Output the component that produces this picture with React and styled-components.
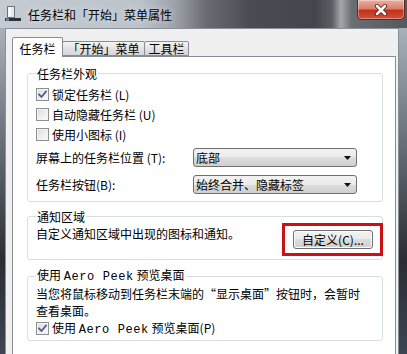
import React from 'react';
import styled, {createGlobalStyle} from 'styled-components';

const GlobalStyle = createGlobalStyle`
  html, body {
    margin: 0;
    padding: 0;
    overflow: hidden;
  }
  body {
    font-family: "Noto Sans CJK SC", "Noto Sans", sans-serif;
    font-size: 12px;
    color: #000;
  }
`;

const Window = styled.div`
  width: 407px;
  height: 354px;
  display: flex;
  flex-direction: column;
  overflow: hidden;
  background: linear-gradient(
    180deg,
    #b9c1c9 0,
    #737b84 120px,
    #2a2d33 260px,
    #3d4552 354px
  );
`;

const TitleBar = styled.div`
  height: 28px;
  flex: none;
  display: flex;
  align-items: flex-start;
  background: linear-gradient(
    90deg,
    #c4cbd3 0,
    #bcc3cb 140px,
    #9da2a9 175px,
    #6b6d74 205px,
    #4b4b53 250px,
    #45454d 315px,
    #5c5e64 332px,
    #a4a8ac 341px,
    #6a6d72 352px,
    #55585e 407px
  );
`;

const AppIcon = styled.svg`
  width: 16px;
  height: 16px;
  margin: 6px 0 0 5px;
  flex: none;
`;

const Title = styled.div`
  margin: 7px 0 0 7px;
  line-height: 16px;
  text-shadow: 0 0 6px rgba(255, 255, 255, 0.7);
`;

const CloseButton = styled.div`
  margin-left: auto;
  margin-right: 2px;
  width: 48px;
  height: 20px;
  box-sizing: border-box;
  border: 1px solid #5a2a24;
  border-top: none;
  border-radius: 0 0 5px 5px;
  background: linear-gradient(
    180deg,
    #e9b0a4 0,
    #d9806c 45%,
    #c2301a 55%,
    #d2523a 100%
  );
  box-shadow: inset 0 0 0 1px rgba(255, 255, 255, 0.35);
  display: flex;
  align-items: center;
  justify-content: center;
`;

const Body = styled.div`
  flex: 1;
  margin: 0 8px 0 5px;
  background: #f0f0f0;
  border: 1px solid #8a9097;
  border-bottom: none;
  padding: 8px 2px 0 6px;
  display: flex;
  flex-direction: column;
  min-height: 0;
`;

const TabStrip = styled.div`
  display: flex;
  align-items: flex-end;
  height: 20px;
  margin-bottom: -1px;
  position: relative;
  z-index: 1;
`;

const Tab = styled.div`
  box-sizing: border-box;
  width: ${p => p.$w}px;
  height: ${p => (p.$active ? 20 : 15)}px;
  margin-bottom: ${p => (p.$active ? 0 : 1)}px;
  margin-left: ${p => (p.$first ? 0 : -1)}px;
  border: 1px solid #898c95;
  border-bottom: ${p => (p.$active ? 'none' : '1px solid #898c95')};
  border-radius: 2px 2px 0 0;
  background: ${p =>
    p.$active ? '#fff' : 'linear-gradient(180deg, #f4f4f4 0, #e4e4e4 50%, #d6d6d6 100%)'};
  display: flex;
  align-items: center;
  justify-content: center;
  line-height: 14px;
  padding-top: ${p => (p.$active ? 2 : 0)}px;
`;

const Panel = styled.div`
  flex: 1;
  background: #fff;
  border: 1px solid #898c95;
  border-bottom: none;
  padding: 10px 12px 0 14px;
`;

const Group = styled.fieldset`
  margin: 0 0 8px;
  border: 1px solid #d5dfe5;
  border-radius: 3px;
  padding: 0 8px 3px;
  min-width: 0;
`;

const Legend = styled.legend`
  padding: 0 1px;
  line-height: 13px;
`;

const CheckRow = styled.div`
  height: ${p => p.$h || 20}px;
  display: flex;
  align-items: center;
  gap: 3px;
  margin-top: ${p => p.$mt || 0}px;
`;

const Box = styled.span`
  box-sizing: border-box;
  width: 13px;
  height: 13px;
  flex: none;
  border: 1px solid #8e8f8f;
  background: linear-gradient(135deg, #dcdcdc 0, #f0f0f0 60%, #fbfbfb 100%);
  box-shadow: inset 0 0 0 1px #f4f4f4;
  display: flex;
  align-items: center;
  justify-content: center;
`;

const Mono = styled.span`
  font-family: "Liberation Mono", monospace;
  font-size: 12px;
  letter-spacing: 0.6px;
`;

const SelectRow = styled.div`
  height: 27px;
  display: grid;
  grid-template-columns: 157px 164px;
  align-items: center;
`;

const Select = styled.div`
  box-sizing: border-box;
  height: 19px;
  border: 1px solid #707070;
  border-radius: 3px;
  background: linear-gradient(
    180deg,
    #f2f2f2 0,
    #ebebeb 50%,
    #dddddd 50%,
    #cfcfcf 100%
  );
  display: flex;
  align-items: center;
  padding: 0 5px 0 2px;
  line-height: 14px;
`;

const Arrow = styled.svg`
  width: 7px;
  height: 4px;
  margin-left: auto;
`;

const NoticeRow = styled.div`
  display: flex;
  align-items: flex-start;
  justify-content: space-between;
`;

const NoticeText = styled.div`
  margin-top: 4px;
  line-height: 14px;
`;

const Highlight = styled.div`
  border: 3px solid #cc1016;
  padding: 4px 7px 4px 8px;
  margin-right: -9px;
`;

const Button = styled.div`
  box-sizing: border-box;
  width: 80px;
  height: 19px;
  border: 1px solid #707070;
  border-radius: 3px;
  background: linear-gradient(
    180deg,
    #f2f2f2 0,
    #ebebeb 50%,
    #dddddd 50%,
    #cfcfcf 100%
  );
  box-shadow: inset 0 0 0 1px #fcfcfc;
  display: flex;
  align-items: center;
  justify-content: center;
  line-height: 14px;
`;

const Paragraph = styled.div`
  margin-top: 1px;
  line-height: 17px;
`;

const CheckBox = ({checked}) => (
  <Box>
    {checked && (
      <svg width="9" height="9" viewBox="0 0 9 9">
        <path
          d="M1 4.5 L3.5 7 L8 1.5"
          fill="none"
          stroke="#4a5f8f"
          strokeWidth="1.8"
          strokeLinecap="square"
        />
      </svg>
    )}
  </Box>
);

const Combo = ({value}) => (
  <Select>
    {value}
    <Arrow viewBox="0 0 7 4">
      <path d="M0 0 H7 L3.5 4 Z" fill="#111" />
    </Arrow>
  </Select>
);

const App = () => (
  <>
    <GlobalStyle />
    <Window>
      <TitleBar>
        <AppIcon viewBox="0 0 16 16">
          <rect x="2.5" y="0.5" width="7" height="11" fill="#e8eaec" stroke="#6d7378" />
          <rect x="3.5" y="1.5" width="2" height="9" fill="#fff" />
          <rect x="0" y="12" width="16" height="3" fill="#2d3238" />
          <rect x="1" y="12.5" width="3" height="2" fill="#7fa0c0" />
        </AppIcon>
        <Title>任务栏和「开始」菜单属性</Title>
        <CloseButton>
          <svg width="14" height="12" viewBox="0 0 14 12">
            <path d="M3 2 L11 10 M11 2 L3 10" stroke="#5a1a12" strokeWidth="4.2" strokeLinecap="round" />
            <path d="M3 2 L11 10 M11 2 L3 10" stroke="#fff" strokeWidth="2.6" strokeLinecap="round" />
          </svg>
        </CloseButton>
      </TitleBar>
      <Body>
        <TabStrip>
          <Tab $active $first $w={51}>任务栏</Tab>
          <Tab $w={83}>「开始」菜单</Tab>
          <Tab $w={45}>工具栏</Tab>
        </TabStrip>
        <Panel>
          <Group>
            <Legend>任务栏外观</Legend>
            <CheckRow $mt={4}>
              <CheckBox checked />
              锁定任务栏 (L)
            </CheckRow>
            <CheckRow>
              <CheckBox />
              自动隐藏任务栏 (U)
            </CheckRow>
            <CheckRow>
              <CheckBox />
              使用小图标 (I)
            </CheckRow>
            <SelectRow>
              <span>屏幕上的任务栏位置 (T):</span>
              <Combo value="底部" />
            </SelectRow>
            <SelectRow>
              <span>任务栏按钮(B):</span>
              <Combo value="始终合并、隐藏标签" />
            </SelectRow>
          </Group>
          <Group>
            <Legend>通知区域</Legend>
            <NoticeRow>
              <NoticeText>自定义通知区域中出现的图标和通知。</NoticeText>
              <Highlight>
                <Button>自定义(C)...</Button>
              </Highlight>
            </NoticeRow>
          </Group>
          <Group>
            <Legend>
              使用 <Mono>Aero Peek</Mono> 预览桌面
            </Legend>
            <Paragraph>
              当您将鼠标移动到任务栏末端的“显示桌面”按钮时，会暂时
              <br />
              查看桌面。
            </Paragraph>
            <CheckRow $h={18}>
              <CheckBox checked />
              <span>
                使用 <Mono>Aero Peek</Mono> 预览桌面(P)
              </span>
            </CheckRow>
          </Group>
        </Panel>
      </Body>
    </Window>
  </>
);

export default App;
